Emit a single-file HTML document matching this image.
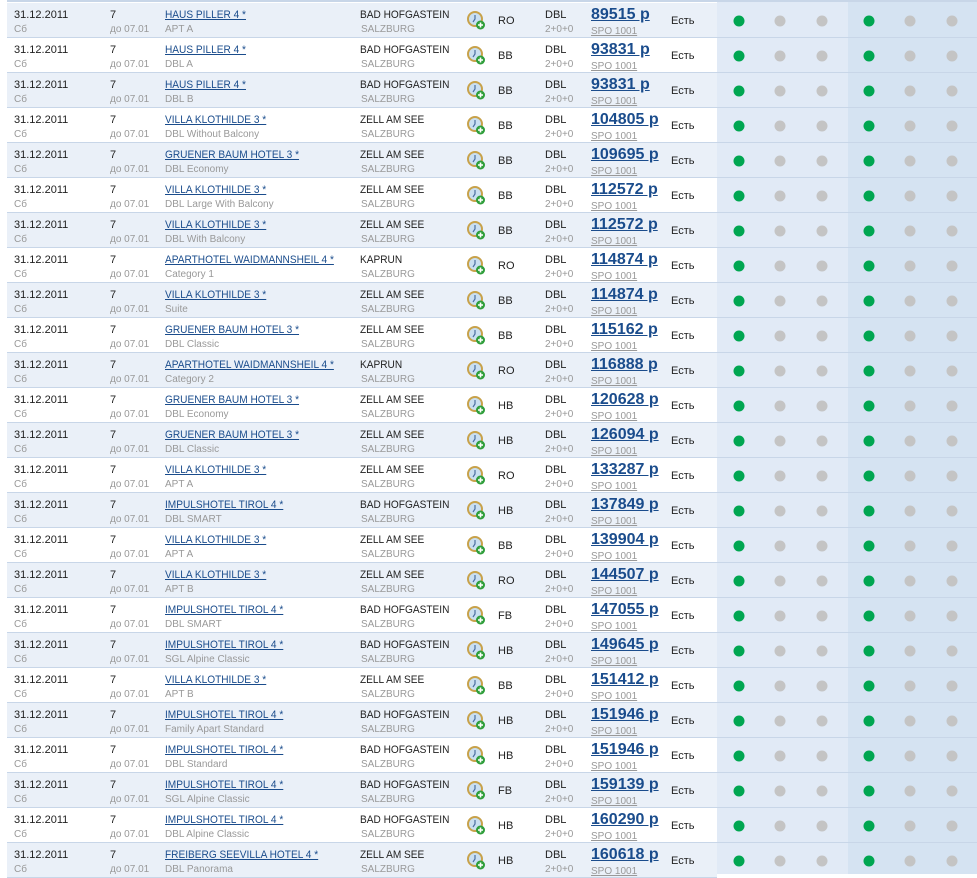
<!DOCTYPE html>
<html><head><meta charset="utf-8"><style>
body{margin:0;width:977px;height:874px;overflow:hidden;background:#fff;font-family:"Liberation Sans",Arial,sans-serif;position:relative}
.top{position:absolute;left:7px;top:0;width:970px;height:2px;background:#c8d6e8}
.bgA{position:absolute;left:717px;top:0;width:131px;height:874px;background:#e1eaf6}
.bgB{position:absolute;left:848px;top:0;width:129px;height:874px;background:#d5e3f2}
.r{position:absolute;left:7px;width:710px;height:34px;border-bottom:1px solid #c8d6e8;font-size:11px;color:#222}
.r.o{background:#eaf0f8}
.r span{position:absolute;white-space:nowrap}
.d{left:7px;top:6px}.d2{left:7px;top:21px;color:#999;font-size:10px}
.n{left:103px;top:6px}.n2{left:103px;top:21px;color:#999;font-size:10px}
.h{left:158px;top:6px;color:#1a4c8c;text-decoration:underline;transform:scaleX(.92);transform-origin:0 0}.h2{left:158px;top:21px;color:#999;font-size:10px}
.c{left:353px;top:6px;transform:scaleX(.92);transform-origin:0 0}.c2{left:354px;top:21px;color:#999;font-size:10px}
.m{left:491px;top:12px}
.t{left:538px;top:6px}.t2{left:538px;top:21px;color:#999;font-size:10px}
.p{left:584px;top:3px;font-size:16px;font-weight:bold;color:#1a4c8c;text-decoration:underline}
.p2{left:584px;top:23px;color:#999;font-size:10px;text-decoration:underline}
.e{left:664px;top:12px}
.ic{position:absolute;left:460px;top:8px}
</style></head><body>
<div class="bgA"></div><div class="bgB"></div><div class="top"></div>
<svg width="0" height="0" style="position:absolute"><defs><symbol id="clk" viewBox="0 0 20 20"><circle cx="8" cy="8" r="7" fill="#c9dff2" stroke="#c8a24a" stroke-width="2"/><path d="M8 4v4l-2 3" stroke="#4a6fa0" stroke-width="1.2" fill="none"/><circle cx="13.5" cy="14" r="4.5" fill="#2e9e3a"/><path d="M13.5 11.5v5M11 14h5" stroke="#fff" stroke-width="1.6"/></symbol></defs></svg>
<div class="r o" style="top:3px"><span class="d">31.12.2011</span><span class="d2">Сб</span><span class="n">7</span><span class="n2">до 07.01</span><span class="h">HAUS PILLER 4 *</span><span class="h2">APT A</span><span class="c">BAD HOFGASTEIN</span><span class="c2">SALZBURG</span><svg class="ic" width="20" height="20"><use href="#clk"/></svg><span class="m">RO</span><span class="t">DBL</span><span class="t2">2+0+0</span><span class="p">89515 р</span><span class="p2">SPO 1001</span><span class="e">Есть</span></div>
<div class="r" style="top:38px"><span class="d">31.12.2011</span><span class="d2">Сб</span><span class="n">7</span><span class="n2">до 07.01</span><span class="h">HAUS PILLER 4 *</span><span class="h2">DBL A</span><span class="c">BAD HOFGASTEIN</span><span class="c2">SALZBURG</span><svg class="ic" width="20" height="20"><use href="#clk"/></svg><span class="m">BB</span><span class="t">DBL</span><span class="t2">2+0+0</span><span class="p">93831 р</span><span class="p2">SPO 1001</span><span class="e">Есть</span></div>
<div class="r o" style="top:73px"><span class="d">31.12.2011</span><span class="d2">Сб</span><span class="n">7</span><span class="n2">до 07.01</span><span class="h">HAUS PILLER 4 *</span><span class="h2">DBL B</span><span class="c">BAD HOFGASTEIN</span><span class="c2">SALZBURG</span><svg class="ic" width="20" height="20"><use href="#clk"/></svg><span class="m">BB</span><span class="t">DBL</span><span class="t2">2+0+0</span><span class="p">93831 р</span><span class="p2">SPO 1001</span><span class="e">Есть</span></div>
<div class="r" style="top:108px"><span class="d">31.12.2011</span><span class="d2">Сб</span><span class="n">7</span><span class="n2">до 07.01</span><span class="h">VILLA KLOTHILDE 3 *</span><span class="h2">DBL Without Balcony</span><span class="c">ZELL AM SEE</span><span class="c2">SALZBURG</span><svg class="ic" width="20" height="20"><use href="#clk"/></svg><span class="m">BB</span><span class="t">DBL</span><span class="t2">2+0+0</span><span class="p">104805 р</span><span class="p2">SPO 1001</span><span class="e">Есть</span></div>
<div class="r o" style="top:143px"><span class="d">31.12.2011</span><span class="d2">Сб</span><span class="n">7</span><span class="n2">до 07.01</span><span class="h">GRUENER BAUM HOTEL 3 *</span><span class="h2">DBL Economy</span><span class="c">ZELL AM SEE</span><span class="c2">SALZBURG</span><svg class="ic" width="20" height="20"><use href="#clk"/></svg><span class="m">BB</span><span class="t">DBL</span><span class="t2">2+0+0</span><span class="p">109695 р</span><span class="p2">SPO 1001</span><span class="e">Есть</span></div>
<div class="r" style="top:178px"><span class="d">31.12.2011</span><span class="d2">Сб</span><span class="n">7</span><span class="n2">до 07.01</span><span class="h">VILLA KLOTHILDE 3 *</span><span class="h2">DBL Large With Balcony</span><span class="c">ZELL AM SEE</span><span class="c2">SALZBURG</span><svg class="ic" width="20" height="20"><use href="#clk"/></svg><span class="m">BB</span><span class="t">DBL</span><span class="t2">2+0+0</span><span class="p">112572 р</span><span class="p2">SPO 1001</span><span class="e">Есть</span></div>
<div class="r o" style="top:213px"><span class="d">31.12.2011</span><span class="d2">Сб</span><span class="n">7</span><span class="n2">до 07.01</span><span class="h">VILLA KLOTHILDE 3 *</span><span class="h2">DBL With Balcony</span><span class="c">ZELL AM SEE</span><span class="c2">SALZBURG</span><svg class="ic" width="20" height="20"><use href="#clk"/></svg><span class="m">BB</span><span class="t">DBL</span><span class="t2">2+0+0</span><span class="p">112572 р</span><span class="p2">SPO 1001</span><span class="e">Есть</span></div>
<div class="r" style="top:248px"><span class="d">31.12.2011</span><span class="d2">Сб</span><span class="n">7</span><span class="n2">до 07.01</span><span class="h">APARTHOTEL WAIDMANNSHEIL 4 *</span><span class="h2">Category 1</span><span class="c">KAPRUN</span><span class="c2">SALZBURG</span><svg class="ic" width="20" height="20"><use href="#clk"/></svg><span class="m">RO</span><span class="t">DBL</span><span class="t2">2+0+0</span><span class="p">114874 р</span><span class="p2">SPO 1001</span><span class="e">Есть</span></div>
<div class="r o" style="top:283px"><span class="d">31.12.2011</span><span class="d2">Сб</span><span class="n">7</span><span class="n2">до 07.01</span><span class="h">VILLA KLOTHILDE 3 *</span><span class="h2">Suite</span><span class="c">ZELL AM SEE</span><span class="c2">SALZBURG</span><svg class="ic" width="20" height="20"><use href="#clk"/></svg><span class="m">BB</span><span class="t">DBL</span><span class="t2">2+0+0</span><span class="p">114874 р</span><span class="p2">SPO 1001</span><span class="e">Есть</span></div>
<div class="r" style="top:318px"><span class="d">31.12.2011</span><span class="d2">Сб</span><span class="n">7</span><span class="n2">до 07.01</span><span class="h">GRUENER BAUM HOTEL 3 *</span><span class="h2">DBL Classic</span><span class="c">ZELL AM SEE</span><span class="c2">SALZBURG</span><svg class="ic" width="20" height="20"><use href="#clk"/></svg><span class="m">BB</span><span class="t">DBL</span><span class="t2">2+0+0</span><span class="p">115162 р</span><span class="p2">SPO 1001</span><span class="e">Есть</span></div>
<div class="r o" style="top:353px"><span class="d">31.12.2011</span><span class="d2">Сб</span><span class="n">7</span><span class="n2">до 07.01</span><span class="h">APARTHOTEL WAIDMANNSHEIL 4 *</span><span class="h2">Category 2</span><span class="c">KAPRUN</span><span class="c2">SALZBURG</span><svg class="ic" width="20" height="20"><use href="#clk"/></svg><span class="m">RO</span><span class="t">DBL</span><span class="t2">2+0+0</span><span class="p">116888 р</span><span class="p2">SPO 1001</span><span class="e">Есть</span></div>
<div class="r" style="top:388px"><span class="d">31.12.2011</span><span class="d2">Сб</span><span class="n">7</span><span class="n2">до 07.01</span><span class="h">GRUENER BAUM HOTEL 3 *</span><span class="h2">DBL Economy</span><span class="c">ZELL AM SEE</span><span class="c2">SALZBURG</span><svg class="ic" width="20" height="20"><use href="#clk"/></svg><span class="m">HB</span><span class="t">DBL</span><span class="t2">2+0+0</span><span class="p">120628 р</span><span class="p2">SPO 1001</span><span class="e">Есть</span></div>
<div class="r o" style="top:423px"><span class="d">31.12.2011</span><span class="d2">Сб</span><span class="n">7</span><span class="n2">до 07.01</span><span class="h">GRUENER BAUM HOTEL 3 *</span><span class="h2">DBL Classic</span><span class="c">ZELL AM SEE</span><span class="c2">SALZBURG</span><svg class="ic" width="20" height="20"><use href="#clk"/></svg><span class="m">HB</span><span class="t">DBL</span><span class="t2">2+0+0</span><span class="p">126094 р</span><span class="p2">SPO 1001</span><span class="e">Есть</span></div>
<div class="r" style="top:458px"><span class="d">31.12.2011</span><span class="d2">Сб</span><span class="n">7</span><span class="n2">до 07.01</span><span class="h">VILLA KLOTHILDE 3 *</span><span class="h2">APT A</span><span class="c">ZELL AM SEE</span><span class="c2">SALZBURG</span><svg class="ic" width="20" height="20"><use href="#clk"/></svg><span class="m">RO</span><span class="t">DBL</span><span class="t2">2+0+0</span><span class="p">133287 р</span><span class="p2">SPO 1001</span><span class="e">Есть</span></div>
<div class="r o" style="top:493px"><span class="d">31.12.2011</span><span class="d2">Сб</span><span class="n">7</span><span class="n2">до 07.01</span><span class="h">IMPULSHOTEL TIROL 4 *</span><span class="h2">DBL SMART</span><span class="c">BAD HOFGASTEIN</span><span class="c2">SALZBURG</span><svg class="ic" width="20" height="20"><use href="#clk"/></svg><span class="m">HB</span><span class="t">DBL</span><span class="t2">2+0+0</span><span class="p">137849 р</span><span class="p2">SPO 1001</span><span class="e">Есть</span></div>
<div class="r" style="top:528px"><span class="d">31.12.2011</span><span class="d2">Сб</span><span class="n">7</span><span class="n2">до 07.01</span><span class="h">VILLA KLOTHILDE 3 *</span><span class="h2">APT A</span><span class="c">ZELL AM SEE</span><span class="c2">SALZBURG</span><svg class="ic" width="20" height="20"><use href="#clk"/></svg><span class="m">BB</span><span class="t">DBL</span><span class="t2">2+0+0</span><span class="p">139904 р</span><span class="p2">SPO 1001</span><span class="e">Есть</span></div>
<div class="r o" style="top:563px"><span class="d">31.12.2011</span><span class="d2">Сб</span><span class="n">7</span><span class="n2">до 07.01</span><span class="h">VILLA KLOTHILDE 3 *</span><span class="h2">APT B</span><span class="c">ZELL AM SEE</span><span class="c2">SALZBURG</span><svg class="ic" width="20" height="20"><use href="#clk"/></svg><span class="m">RO</span><span class="t">DBL</span><span class="t2">2+0+0</span><span class="p">144507 р</span><span class="p2">SPO 1001</span><span class="e">Есть</span></div>
<div class="r" style="top:598px"><span class="d">31.12.2011</span><span class="d2">Сб</span><span class="n">7</span><span class="n2">до 07.01</span><span class="h">IMPULSHOTEL TIROL 4 *</span><span class="h2">DBL SMART</span><span class="c">BAD HOFGASTEIN</span><span class="c2">SALZBURG</span><svg class="ic" width="20" height="20"><use href="#clk"/></svg><span class="m">FB</span><span class="t">DBL</span><span class="t2">2+0+0</span><span class="p">147055 р</span><span class="p2">SPO 1001</span><span class="e">Есть</span></div>
<div class="r o" style="top:633px"><span class="d">31.12.2011</span><span class="d2">Сб</span><span class="n">7</span><span class="n2">до 07.01</span><span class="h">IMPULSHOTEL TIROL 4 *</span><span class="h2">SGL Alpine Classic</span><span class="c">BAD HOFGASTEIN</span><span class="c2">SALZBURG</span><svg class="ic" width="20" height="20"><use href="#clk"/></svg><span class="m">HB</span><span class="t">DBL</span><span class="t2">2+0+0</span><span class="p">149645 р</span><span class="p2">SPO 1001</span><span class="e">Есть</span></div>
<div class="r" style="top:668px"><span class="d">31.12.2011</span><span class="d2">Сб</span><span class="n">7</span><span class="n2">до 07.01</span><span class="h">VILLA KLOTHILDE 3 *</span><span class="h2">APT B</span><span class="c">ZELL AM SEE</span><span class="c2">SALZBURG</span><svg class="ic" width="20" height="20"><use href="#clk"/></svg><span class="m">BB</span><span class="t">DBL</span><span class="t2">2+0+0</span><span class="p">151412 р</span><span class="p2">SPO 1001</span><span class="e">Есть</span></div>
<div class="r o" style="top:703px"><span class="d">31.12.2011</span><span class="d2">Сб</span><span class="n">7</span><span class="n2">до 07.01</span><span class="h">IMPULSHOTEL TIROL 4 *</span><span class="h2">Family Apart Standard</span><span class="c">BAD HOFGASTEIN</span><span class="c2">SALZBURG</span><svg class="ic" width="20" height="20"><use href="#clk"/></svg><span class="m">HB</span><span class="t">DBL</span><span class="t2">2+0+0</span><span class="p">151946 р</span><span class="p2">SPO 1001</span><span class="e">Есть</span></div>
<div class="r" style="top:738px"><span class="d">31.12.2011</span><span class="d2">Сб</span><span class="n">7</span><span class="n2">до 07.01</span><span class="h">IMPULSHOTEL TIROL 4 *</span><span class="h2">DBL Standard</span><span class="c">BAD HOFGASTEIN</span><span class="c2">SALZBURG</span><svg class="ic" width="20" height="20"><use href="#clk"/></svg><span class="m">HB</span><span class="t">DBL</span><span class="t2">2+0+0</span><span class="p">151946 р</span><span class="p2">SPO 1001</span><span class="e">Есть</span></div>
<div class="r o" style="top:773px"><span class="d">31.12.2011</span><span class="d2">Сб</span><span class="n">7</span><span class="n2">до 07.01</span><span class="h">IMPULSHOTEL TIROL 4 *</span><span class="h2">SGL Alpine Classic</span><span class="c">BAD HOFGASTEIN</span><span class="c2">SALZBURG</span><svg class="ic" width="20" height="20"><use href="#clk"/></svg><span class="m">FB</span><span class="t">DBL</span><span class="t2">2+0+0</span><span class="p">159139 р</span><span class="p2">SPO 1001</span><span class="e">Есть</span></div>
<div class="r" style="top:808px"><span class="d">31.12.2011</span><span class="d2">Сб</span><span class="n">7</span><span class="n2">до 07.01</span><span class="h">IMPULSHOTEL TIROL 4 *</span><span class="h2">DBL Alpine Classic</span><span class="c">BAD HOFGASTEIN</span><span class="c2">SALZBURG</span><svg class="ic" width="20" height="20"><use href="#clk"/></svg><span class="m">HB</span><span class="t">DBL</span><span class="t2">2+0+0</span><span class="p">160290 р</span><span class="p2">SPO 1001</span><span class="e">Есть</span></div>
<div class="r o" style="top:843px"><span class="d">31.12.2011</span><span class="d2">Сб</span><span class="n">7</span><span class="n2">до 07.01</span><span class="h">FREIBERG SEEVILLA HOTEL 4 *</span><span class="h2">DBL Panorama</span><span class="c">ZELL AM SEE</span><span class="c2">SALZBURG</span><svg class="ic" width="20" height="20"><use href="#clk"/></svg><span class="m">HB</span><span class="t">DBL</span><span class="t2">2+0+0</span><span class="p">160618 р</span><span class="p2">SPO 1001</span><span class="e">Есть</span></div>
<svg style="position:absolute;left:717px;top:0" width="260" height="874">
<defs><g id="dl"><line x1="0" y1="37.5" x2="260" y2="37.5" stroke="#c8d6e8"/><circle cx="22" cy="21" r="5.5" fill="#00a651"/><circle cx="63" cy="21" r="5.5" fill="#c4c4c4"/><circle cx="105" cy="21" r="5.5" fill="#c4c4c4"/><circle cx="152" cy="21" r="5.5" fill="#00a651"/><circle cx="193" cy="21" r="5.5" fill="#c4c4c4"/><circle cx="235" cy="21" r="5.5" fill="#c4c4c4"/></g></defs>
<rect x="0" y="0" width="260" height="2" fill="#c8d6e8"/>
<use href="#dl" y="0"/><use href="#dl" y="35"/><use href="#dl" y="70"/><use href="#dl" y="105"/><use href="#dl" y="140"/><use href="#dl" y="175"/><use href="#dl" y="210"/><use href="#dl" y="245"/><use href="#dl" y="280"/><use href="#dl" y="315"/><use href="#dl" y="350"/><use href="#dl" y="385"/><use href="#dl" y="420"/><use href="#dl" y="455"/><use href="#dl" y="490"/><use href="#dl" y="525"/><use href="#dl" y="560"/><use href="#dl" y="595"/><use href="#dl" y="630"/><use href="#dl" y="665"/><use href="#dl" y="700"/><use href="#dl" y="735"/><use href="#dl" y="770"/><use href="#dl" y="805"/><use href="#dl" y="840"/>
</svg>
</body></html>
